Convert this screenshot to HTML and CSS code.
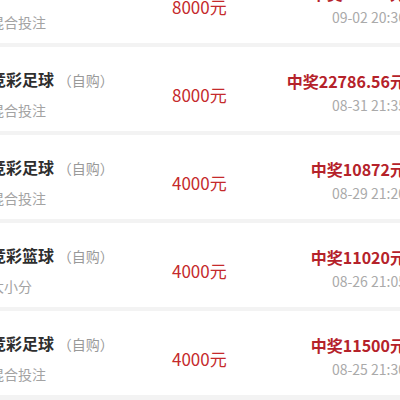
FILE: index.html
```html
<!DOCTYPE html>
<html lang="zh">
<head>
  <meta charset="UTF-8" />
  <title>投注记录</title>
  <meta name="viewport" content="width=device-width, initial-scale=1.0" />
  <link rel="stylesheet" href="styles.css">
</head>
<body>
  <div class="list">
    <div class="order">
      <div class="info">
        <div class="title">竞彩足球 <span class="type">（自购）</span></div>
        <div class="play">混合投注</div>
      </div>
      <div class="amount">8000元</div>
      <div class="result">
        <div class="win">中奖21650元</div>
        <div class="time">09-02 20:36</div>
      </div>
    </div>

    <div class="order">
      <div class="info">
        <div class="title">竞彩足球 <span class="type">（自购）</span></div>
        <div class="play">混合投注</div>
      </div>
      <div class="amount">8000元</div>
      <div class="result">
        <div class="win">中奖22786.56元</div>
        <div class="time">08-31 21:35</div>
      </div>
    </div>

    <div class="order">
      <div class="info">
        <div class="title">竞彩足球 <span class="type">（自购）</span></div>
        <div class="play">混合投注</div>
      </div>
      <div class="amount">4000元</div>
      <div class="result">
        <div class="win">中奖10872元</div>
        <div class="time">08-29 21:20</div>
      </div>
    </div>

    <div class="order">
      <div class="info">
        <div class="title">竞彩篮球 <span class="type">（自购）</span></div>
        <div class="play">大小分</div>
      </div>
      <div class="amount">4000元</div>
      <div class="result">
        <div class="win">中奖11020元</div>
        <div class="time">08-26 21:05</div>
      </div>
    </div>

    <div class="order">
      <div class="info">
        <div class="title">竞彩足球 <span class="type">（自购）</span></div>
        <div class="play">混合投注</div>
      </div>
      <div class="amount">4000元</div>
      <div class="result">
        <div class="win">中奖11500元</div>
        <div class="time">08-25 21:30</div>
      </div>
    </div>
  </div>
</body>
</html>
```

FILE: styles.css
```css
body {
  font-family: "Noto Sans CJK SC", sans-serif;
  background: #f3f3f3;
  margin: 0;
  overflow: hidden;
}
.list {
  display: flex;
  flex-direction: column;
  gap: 4px;
  width: 446px;
  margin: -41px 0 0 -25px;
}
.order {
  display: grid;
  grid-template-columns: 182px auto 1fr;
  box-sizing: border-box;
  height: 84px;
  padding: 21px 15px 0;
  background: white;
}
.title {
  font-size: 16px;
  line-height: 22px;
  font-weight: bold;
  color: #2e2e2e;
}
.type {
  font-size: 14px;
  font-weight: normal;
  color: #999;
}
.play {
  margin-top: 9px;
  font-size: 14px;
  line-height: 20px;
  color: #a3a3a3;
}
.amount {
  margin-top: 16px;
  font-size: 17px;
  line-height: 22px;
  color: #c52a2c;
}
.result {
  text-align: right;
}
.win {
  margin-top: 2px;
  font-size: 16px;
  line-height: 22px;
  font-weight: bold;
  color: #b5222a;
}
.time {
  margin-top: 3px;
  font-size: 14px;
  line-height: 20px;
  color: #aaa;
}
```
